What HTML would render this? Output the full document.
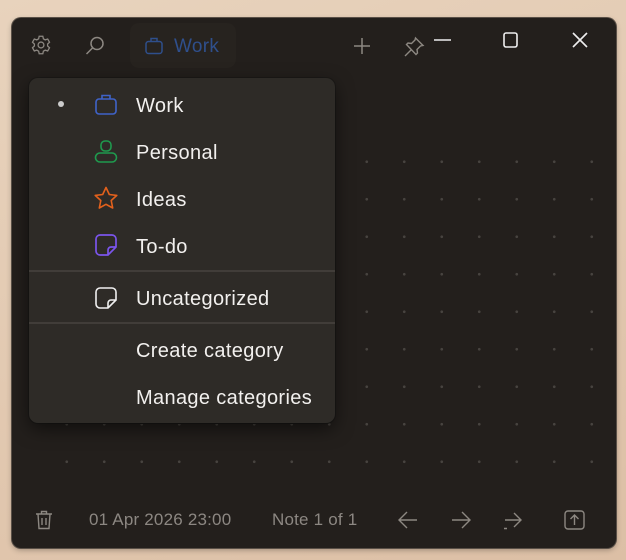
<!DOCTYPE html>
<html><head><style>
body{margin:0;width:626px;height:560px;background:linear-gradient(160deg,#e8d3bd,#dcbfa5);position:relative;overflow:hidden;font-family:"Liberation Sans",sans-serif}
.win{position:absolute;left:12px;top:18px;width:604px;height:530px;background:#231f1c;border-radius:9px;box-shadow:0 0 0 1px #5a5047,0 2px 6px rgba(0,0,0,.3)}
.dots{position:absolute;left:47.75px;top:143.25px;width:562.5px;height:337.5px;background-image:radial-gradient(circle,#47433f 1.1px,transparent 1.6px);background-size:37.5px 37.5px}
.pill{position:absolute;left:130px;top:23px;width:106px;height:45px;background:#27231f;border-radius:9px}
.menu{position:absolute;left:29px;top:78px;width:306px;height:345px;background:#2e2b27;border-radius:9px;box-shadow:0 6px 18px rgba(0,0,0,.55),0 0 0 1px #1c1a18}
.it{position:absolute;left:136px;color:#f2f0ee;font-size:20px;letter-spacing:0.35px;line-height:22px}
.sep{position:absolute;left:29px;width:306px;height:2px;background:#413d39}
svg{position:absolute;overflow:visible}
.ft{position:absolute;top:510px;color:#8c8782;font-size:17px;line-height:20px;letter-spacing:0.2px}
</style></head><body>
<div class="win"></div>
<div class="dots"></div>
<div class="pill"></div>
<svg style="left:30px;top:34px" width="22" height="22" viewBox="0 0 24 24" fill="none" stroke="#8d8882" stroke-width="1.4"><path d="M10 2.5h4l.6 2.8 2 1.1 2.7-.9 2 3.5-2.1 1.9v2.2l2.1 1.9-2 3.5-2.7-.9-2 1.1-.6 2.8h-4l-.6-2.8-2-1.1-2.7.9-2-3.5 2.1-1.9v-2.2L2.7 9l2-3.5 2.7.9 2-1.1z"/><circle cx="12" cy="12" r="3.2"/></svg>
<svg style="left:84px;top:35px" width="22" height="22" viewBox="0 0 22 22" fill="none" stroke="#8d8882" stroke-width="1.5"><circle cx="13" cy="8.5" r="6"/><path d="M8.6 12.9 2.5 19"/></svg>
<svg style="left:145px;top:37px" width="18" height="18" viewBox="0 0 18 18" fill="none" stroke="#2f4f8c" stroke-width="1.5"><rect x="1" y="4.5" width="16" height="12" rx="2.5"/><path d="M6 4.5V1.5h6v3"/></svg>
<div style="position:absolute;left:174px;top:36px;color:#2f4f8c;font-size:19px;letter-spacing:0.3px;line-height:22px">Work</div>
<svg style="left:353px;top:37px" width="18" height="18" fill="none" stroke="#8d8882" stroke-width="1.5"><path d="M9 1v16M1 9h16"/></svg>
<svg style="left:403px;top:36px" width="22" height="22" viewBox="0 0 22 22" fill="none" stroke="#8d8882" stroke-width="1.4"><path d="M12.5 2l7.5 7.5-2.5.5-3.5 3.5.5 3.5-1.5 1.5L3.5 8.5 5 7l3.5.5L12 4z M8 14l-6 6"/></svg>
<svg style="left:434px;top:39px" width="17" height="2"><path d="M0 1h17" stroke="#eee" stroke-width="1.6"/></svg>
<svg style="left:503px;top:32px" width="16" height="16"><rect x="1" y="1" width="13" height="14" rx="2" fill="none" stroke="#eee" stroke-width="1.6"/></svg>
<svg style="left:572px;top:32px" width="16" height="16"><path d="M1 1l14 14M15 1 1 15" stroke="#eee" stroke-width="1.6"/></svg>

<div class="menu"></div>
<div style="position:absolute;left:58px;top:101px;width:6px;height:6px;border-radius:50%;background:#ccc"></div>
<svg style="left:95px;top:93px" width="22" height="22" viewBox="0 0 22 22" fill="none" stroke="#3f63c9" stroke-width="1.6"><rect x="1" y="6" width="20" height="15" rx="3"/><path d="M7 6V2.5h8V6"/></svg>
<div class="it" style="top:95px">Work</div>
<svg style="left:94px;top:140px" width="24" height="24" viewBox="0 0 24 24" fill="none" stroke="#1f9a4e" stroke-width="1.6"><rect x="7" y="1" width="10" height="10" rx="4"/><rect x="1.5" y="13" width="21" height="9" rx="4.5"/></svg>
<div class="it" style="top:142px">Personal</div>
<svg style="left:93px;top:186px" width="26" height="25" viewBox="0 0 26 25" fill="none" stroke="#e3611c" stroke-width="1.6" stroke-linejoin="round"><path d="M13 1.5l3.3 7 7.5.9-5.6 5.1 1.5 7.5L13 18.3 6.3 22l1.5-7.5L2.2 9.4l7.5-.9z"/></svg>
<div class="it" style="top:189px">Ideas</div>
<svg style="left:95px;top:234px" width="22" height="22" viewBox="0 0 22 22" fill="none" stroke="#7b55ec" stroke-width="1.7"><path d="M13 21H5a4 4 0 0 1-4-4V5a4 4 0 0 1 4-4h12a4 4 0 0 1 4 4v8zM13 21v-5a3 3 0 0 1 3-3h5"/></svg>
<div class="it" style="top:236px">To-do</div>
<div class="sep" style="top:270px"></div>
<svg style="left:95px;top:287px" width="22" height="22" viewBox="0 0 22 22" fill="none" stroke="#f0f0f0" stroke-width="1.6"><path d="M13 21H5a4 4 0 0 1-4-4V5a4 4 0 0 1 4-4h12a4 4 0 0 1 4 4v8zM13 21v-5a3 3 0 0 1 3-3h5"/></svg>
<div class="it" style="top:288px">Uncategorized</div>
<div class="sep" style="top:322px"></div>
<div class="it" style="top:340px">Create category</div>
<div class="it" style="top:387px">Manage categories</div>

<svg style="left:35px;top:510px" width="18" height="20" viewBox="0 0 18 20" fill="none" stroke="#8d8882" stroke-width="1.4"><path d="M1 4h16M6.5 4V1.5h5V4M3 4l1 14.5h10L15 4M7 8v7M11 8v7"/></svg>
<div class="ft" style="left:89px">01 Apr 2026 23:00</div>
<div class="ft" style="left:272px">Note 1 of 1</div>
<svg style="left:398px;top:511px" width="20" height="18" fill="none" stroke="#8d8882" stroke-width="1.4"><path d="M19 9H1M9 1 1 9l8 8"/></svg>
<svg style="left:451px;top:511px" width="20" height="18" fill="none" stroke="#8d8882" stroke-width="1.4"><path d="M1 9h18M11 1l8 8-8 8"/></svg>
<svg style="left:502px;top:511px" width="20" height="20" fill="none" stroke="#8d8882" stroke-width="1.4"><path d="M3 9h16M12 2l7 7-7 7M2 17.5h3"/></svg>
<svg style="left:564px;top:510px" width="21" height="20" fill="none" stroke="#8d8882" stroke-width="1.4"><rect x="1" y="1" width="19" height="18" rx="3"/><path d="M10.5 15V5M6.5 9l4-4 4 4"/></svg>
</body></html>
